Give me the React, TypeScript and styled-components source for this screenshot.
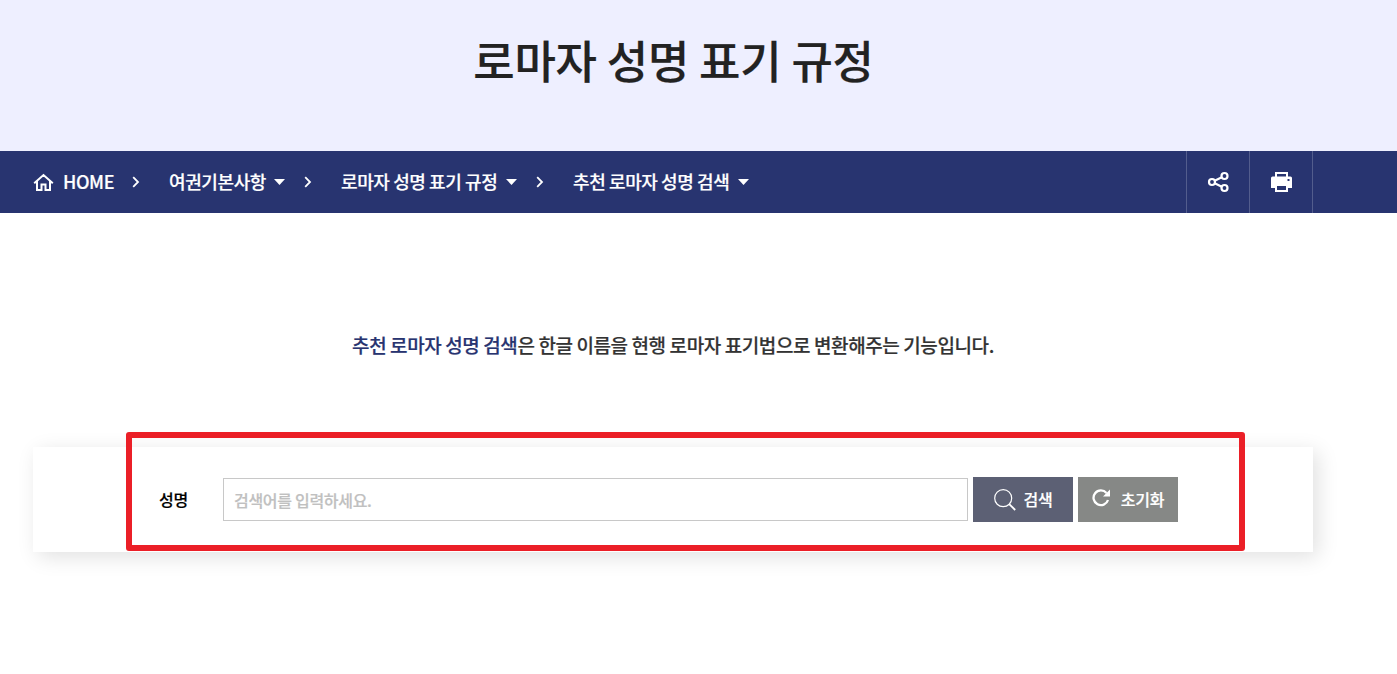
import styled, { createGlobalStyle } from "styled-components";

const GlobalStyle = createGlobalStyle`
  * {
    box-sizing: border-box;
  }

  body {
    margin: 0;
    background: #fff;
    font-family: "Noto Sans CJK KR", "Noto Sans", sans-serif;
    font-weight: 500;
    color: #222;
    overflow: hidden;
    -webkit-text-stroke: 0.2px;
  }

  svg {
    flex-shrink: 0;
  }
`;

const Page = styled.div`
  width: 100%;
  height: 674px;
  overflow: hidden;
`;

const Hero = styled.header`
  height: 151px;
  padding: 27px 50px 0 0;
  background: #eeefff;
  text-align: center;
`;

const Title = styled.h1`
  margin: 0;
  font-size: 45px;
  font-weight: 500;
  line-height: 66px;
  letter-spacing: -0.2px;
  color: #222;
`;

const Bar = styled.nav`
  height: 62px;
  padding: 0 84px 0 33px;
  background: #283470;
  display: flex;
  align-items: center;
  justify-content: space-between;
  color: #fff;
`;

const Crumbs = styled.div`
  display: flex;
  align-items: center;
  font-size: 18px;
  line-height: 26px;
  letter-spacing: -0.4px;
`;

const Home = styled.a`
  display: flex;
  align-items: center;
  gap: 8px;
  width: 80px;
`;

const Crumb = styled.a<{ $width: number }>`
  display: flex;
  align-items: center;
  justify-content: space-between;
  width: ${({ $width }) => $width}px;
  white-space: nowrap;
`;

const CrumbText = styled.span`
  margin: 0 0 2px 1px;
`;

const Next = styled.svg`
  width: 8px;
  height: 12px;
  margin: 0 28px 0 19px;
`;

const Tools = styled.div`
  display: flex;
  height: 100%;
  border-left: 1px solid #535d8d;
`;

const Tool = styled.button`
  width: 63px;
  height: 100%;
  padding: 0;
  border: 0;
  border-right: 1px solid #535d8d;
  background: none;
  color: #fff;
  display: flex;
  align-items: center;
  justify-content: center;
  cursor: pointer;
`;

const Content = styled.main`
  width: 1280px;
  margin-left: 33px;
`;

const Guide = styled.p`
  margin: 0;
  padding-top: 118px;
  font-size: 19px;
  line-height: 28px;
  letter-spacing: -0.4px;
  text-align: center;
  color: #333;

  & strong {
    font-weight: 500;
    color: #283470;
  }
`;

const SearchBox = styled.section`
  position: relative;
  height: 105px;
  margin-top: 88px;
  padding: 30px 0 0 126px;
  background: #fff;
  box-shadow: 5px 5px 20px rgba(0, 0, 0, 0.12);
  display: flex;
  align-items: flex-start;
`;

const Label = styled.label`
  width: 64px;
  font-size: 16px;
  line-height: 45px;
  letter-spacing: -0.3px;
  color: #000;
`;

const Input = styled.input`
  width: 745px;
  height: 43px;
  margin: 1px 5px 0 0;
  padding: 0 10px;
  border: 1px solid #c8c8c8;
  border-radius: 0;
  background: #fff;
  font: inherit;
  font-size: 16px;
  letter-spacing: -0.3px;

  &::placeholder {
    color: #c0c0c0;
    opacity: 1;
  }
`;

const Button = styled.button<{ $color: string; $gap: number }>`
  width: 100px;
  height: 45px;
  margin-right: 5px;
  padding: 0 0 2px;
  border: 0;
  flex-shrink: 0;
  background: ${({ $color }) => $color};
  color: #fff;
  font: inherit;
  font-size: 16px;
  letter-spacing: -0.3px;
  display: flex;
  align-items: center;
  justify-content: center;
  gap: ${({ $gap }) => $gap}px;
  cursor: pointer;
`;

const Highlight = styled.div`
  position: absolute;
  left: 93px;
  top: -15px;
  width: 1119px;
  height: 119px;
  border: 6px solid #eb1f27;
  border-radius: 3px;
  pointer-events: none;
`;

const crumbs = [
  { label: "여권기본사항", width: 117 },
  { label: "로마자 성명 표기 규정", width: 177 },
  { label: "추천 로마자 성명 검색", width: 177 },
];

function HomeIcon() {
  return (
    <svg width="21" height="19" viewBox="0 0 21 19" fill="none" stroke="#fff" strokeWidth="2">
      <path d="M1.2 10.2 10.5 2l9.3 8.2M4 8v9h4.5v-5.5h4V17H17V8" />
    </svg>
  );
}

function ChevronIcon() {
  return (
    <Next viewBox="0 0 8 12" fill="none" stroke="#fff" strokeWidth="1.8">
      <path d="M1.2 1.2 6 6l-4.8 4.8" />
    </Next>
  );
}

function CaretIcon() {
  return (
    <svg width="11" height="6" viewBox="0 0 11 6" fill="#fff">
      <path d="M0 0h11L5.5 6z" />
    </svg>
  );
}

function ShareIcon() {
  return (
    <svg width="22" height="22" viewBox="0 0 22 22" fill="none" stroke="#fff" strokeWidth="2.2">
      <circle cx="5" cy="11" r="3" />
      <circle cx="17.5" cy="5" r="3" />
      <circle cx="17.5" cy="17" r="3" />
      <path d="m7.7 9.7 7.1-3.4M7.7 12.3l7.1 3.4" />
    </svg>
  );
}

function PrintIcon() {
  return (
    <svg width="21" height="20" viewBox="0 0 21 20">
      <path
        fill="#fff"
        fillRule="evenodd"
        d="M4 0h13v4.5h2.5A1.5 1.5 0 0 1 21 6v10h-4v4H4v-4H0V6a1.5 1.5 0 0 1 1.5-1.5H4zM6 2v2.5h9V2zM6 14v4h9v-4zM16.500 7v2h2V7z"
      />
    </svg>
  );
}

function SearchIcon() {
  return (
    <svg width="22" height="24" viewBox="0 -2 22 24" fill="none" stroke="#fff">
      <circle cx="9.2" cy="9.2" r="8.5" strokeWidth="1.2" />
      <path d="m15.2 15.2 6 5.8" strokeWidth="1.8" />
    </svg>
  );
}

function ResetIcon() {
  return (
    <svg width="19" height="20" viewBox="0 0 19 20" fill="none">
      <path d="M14.5 3.9A7.4 7.4 0 1 0 16 11" stroke="#fff" strokeWidth="2.3" />
      <path d="M18 .5v7h-7z" fill="#fff" />
    </svg>
  );
}

function App() {
  return (
    <Page>
      <GlobalStyle />
      <Hero>
        <Title>로마자 성명 표기 규정</Title>
      </Hero>
      <Bar>
        <Crumbs>
          <Home>
            <HomeIcon />
            <CrumbText>HOME</CrumbText>
          </Home>
          {crumbs.map(({ label, width }) => (
            <Crumbs key={label}>
              <ChevronIcon />
              <Crumb $width={width}>
                <CrumbText>{label}</CrumbText>
                <CaretIcon />
              </Crumb>
            </Crumbs>
          ))}
        </Crumbs>
        <Tools>
          <Tool aria-label="공유">
            <ShareIcon />
          </Tool>
          <Tool aria-label="인쇄">
            <PrintIcon />
          </Tool>
        </Tools>
      </Bar>
      <Content>
        <Guide>
          <strong>추천 로마자 성명 검색</strong>은 한글 이름을 현행 로마자 표기법으로 변환해주는 기능입니다.
        </Guide>
        <SearchBox>
          <Label htmlFor="name">성명</Label>
          <Input id="name" placeholder="검색어를 입력하세요." />
          <Button $color="#5c6074" $gap={8}>
            <SearchIcon /> 검색
          </Button>
          <Button $color="#868886" $gap={10}>
            <ResetIcon /> 초기화
          </Button>
          <Highlight />
        </SearchBox>
      </Content>
    </Page>
  );
}
export default App;
